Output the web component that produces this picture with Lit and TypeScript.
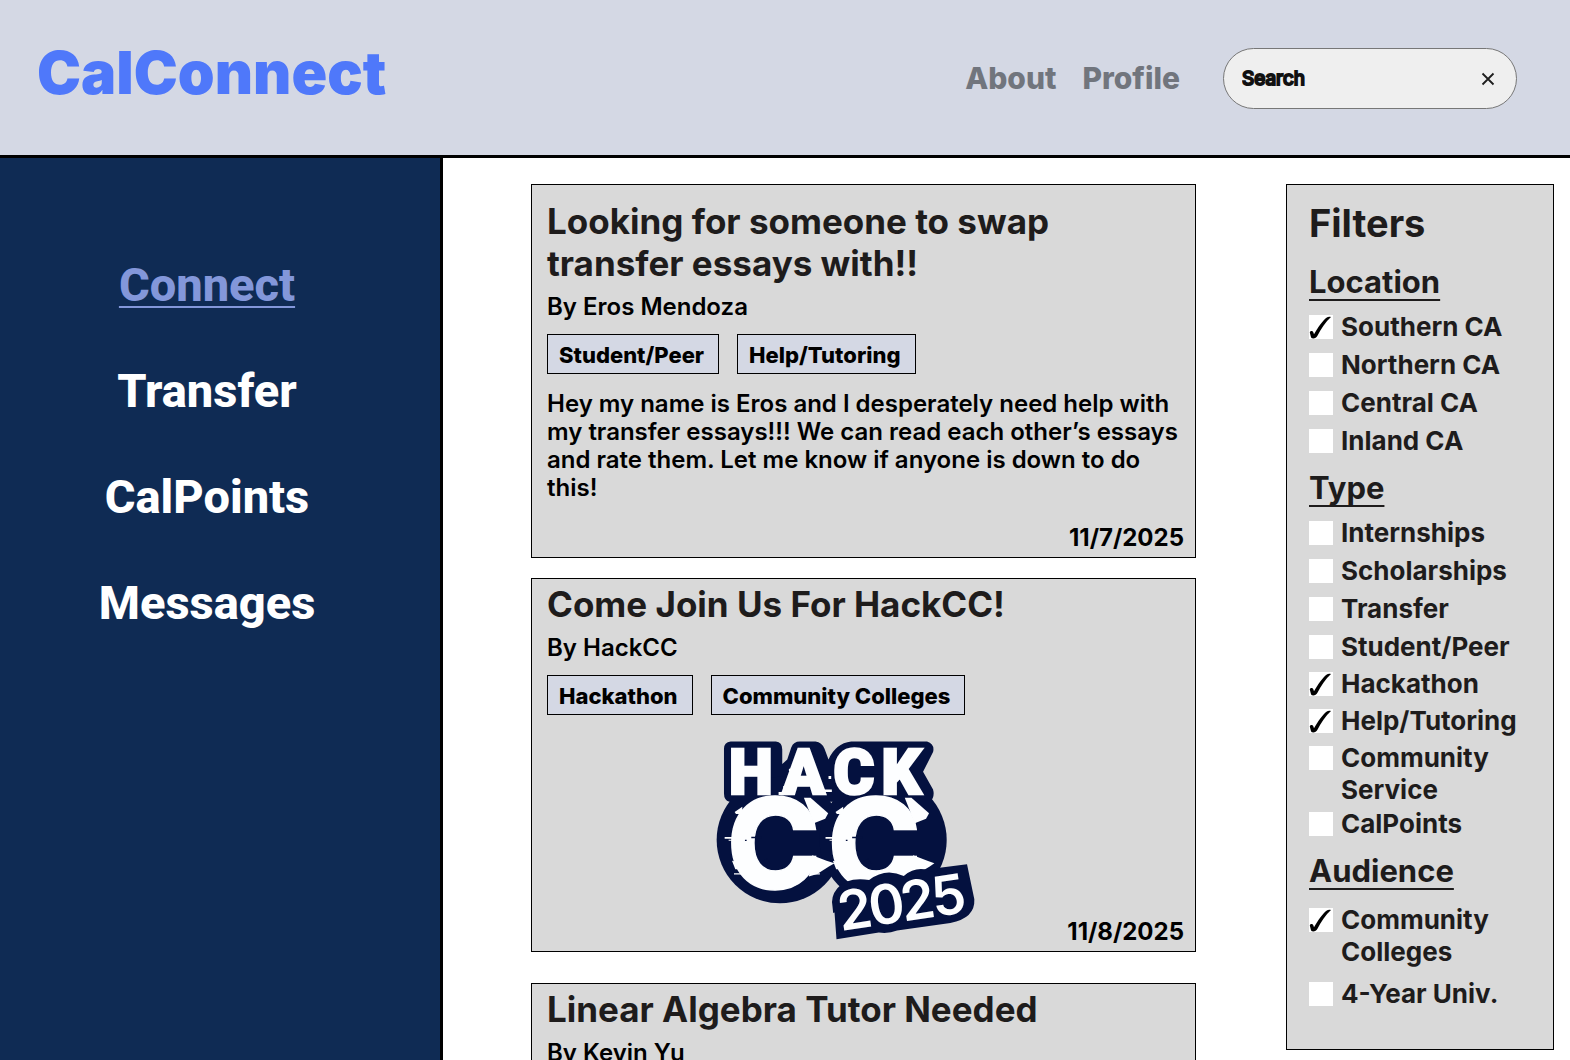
import { LitElement, html, css, nothing } from "lit";
import { customElement, property } from "lit/decorators.js";

interface FilterItem {
  label: string;
  checked?: boolean;
  spacing?: "close" | "snug" | "wide";
}

interface FilterGroup {
  name: string;
  items: FilterItem[];
}

const GROUPS: FilterGroup[] = [
  {
    name: "Location",
    items: [
      { label: "Southern CA", checked: true },
      { label: "Northern CA" },
      { label: "Central CA" },
      { label: "Inland CA" },
    ],
  },
  {
    name: "Type",
    items: [
      { label: "Internships" },
      { label: "Scholarships" },
      { label: "Transfer" },
      { label: "Student/Peer" },
      { label: "Hackathon", checked: true, spacing: "close" },
      { label: "Help/Tutoring", checked: true, spacing: "close" },
      { label: "Community Service", spacing: "close" },
      { label: "CalPoints", spacing: "snug" },
    ],
  },
  {
    name: "Audience",
    items: [
      { label: "Community Colleges", checked: true, spacing: "wide" },
      { label: "4-Year Univ.", spacing: "wide" },
    ],
  },
];

@customElement("hack-logo")
export class HackLogo extends LitElement {
  static styles = css`
    :host { display: block; }
    .logo { display: block; width: 263px; height: 200px; }
    .navy { fill: #04113f; }
    .white { fill: #fdfeff; }
    .hack { font: 900 187px Roboto, sans-serif; fill: #fdfeff; stroke: #fdfeff; stroke-width: 8px; }
    .cc { font: 800 378px Inter, sans-serif; fill: #fdfeff; stroke: #fdfeff; stroke-width: 4px; }
    .year { font: 600 164px Inter, sans-serif; fill: #fdfeff; }
  `;

  render() {
    return html`
      <svg class="logo" viewBox="40 30 790 600" role="img" aria-label="Hack CC 2025">
        <path class="navy" d="M90 34H226Q245 36 245 58V102L260 88 272 52Q279 34 298 34H345Q364 36 372 56L384 88Q405 40 452 34H680Q704 42 698 66L668 125 698 178Q704 200 690 215H86Q70 210 70 190V56Q70 36 90 34Z"></path>
        <circle class="navy" cx="238" cy="330" r="190"></circle>
        <circle class="navy" cx="548" cy="330" r="191"></circle>
        <text class="cc" x="78 381" y="478">CC</text>
        <g class="white">
          <path d="M310 203H330L383 250 374 266 340 280Z"></path>
          <path d="M613 203H633L686 250 677 266 643 280Z"></path>
          <path d="M335 376L378 392 402 400 384 410 350 432 325 440Z"></path>
          <path d="M638 376L681 392 702 400 687 410 650 432 628 440Z"></path>
          <path d="M72 321H102V326H72ZM84 329H102V332H84ZM102 246L125 230V252H106ZM94 392L120 398 116 418H104ZM100 430H128V434H100ZM340 430H358V434H340Z"></path>
          <path d="M375 321H405V326H375ZM387 329H405V332H387ZM405 246L428 230V252H409ZM397 392L423 398 419 418H407Z"></path>
        </g>
        <g class="navy">
          <path d="M152 320H182V325H152ZM133 329H138V333H133ZM184 394L200 386 210 402 200 402Z"></path>
          <path d="M455 320H485V325H455ZM436 329H441V333H436ZM487 394L503 386 513 402 503 402Z"></path>
        </g>
        <text class="hack" x="85 246 399 543" y="192">HACK</text>
        <path class="white" d="M265 116H285V123H265ZM272 130H292V136H272ZM248 168H268V178H248ZM234 186H262V195H234ZM384 138H392V147H384ZM370 178H394V186H370Z"></path>
        <path class="navy" d="M402 548L408 628 535 608Q565 612 590 602L750 579Q825 565 822 508L800 403 712 414 708 432Q655 400 610 438Q555 412 506 450Q440 440 410 476Q390 500 396 530L398 549Z"></path>
        <g transform="translate(421 603) rotate(-8.5)">
          <text class="year" x="0 93 190 284" y="0">2025</text>
        </g>
      </svg>
    `;
  }
}

@customElement("post-card")
export class PostCard extends LitElement {
  @property() heading = "";
  @property() author = "";
  @property() body = "";
  @property() date = "";
  @property({ attribute: false }) tags: string[] = [];
  @property({ type: Boolean }) logo = false;

  static styles = css`
    :host {
      display: flex;
      flex-direction: column;
      box-sizing: border-box;
      min-height: 374px;
      flex: none;
      padding: 4px 11px 5px 15px;
      border: 1px solid #000;
      background: #d9d9d9;
      color: #000;
    }
    .title { margin: 0; font-size: 35px; font-weight: 700; line-height: 42px; color: #1e1c1c; }
    .by { margin: 8px 0 0; font-size: 24px; font-weight: 600; line-height: 30px; }
    .tags { display: flex; gap: 18px; margin: 12px 0 0; padding: 0; list-style: none; }
    .tag {
      box-sizing: border-box;
      height: 40px;
      padding: 0 14px 0 11px;
      border: 1px solid #000;
      background: #d4d8e4;
      font-size: 22px;
      font-weight: 800;
      line-height: 40px;
    }
    .body { margin: 16px 0 0; font-size: 24px; font-weight: 600; line-height: 28px; }
    .foot { display: flex; flex: 1; align-items: flex-end; justify-content: flex-end; }
    .art { margin: 25px auto 6px 167px; }
    .date { font-size: 24px; font-weight: 700; line-height: 28px; }
  `;

  render() {
    return html`
      <h2 class="title">${this.heading}</h2>
      <p class="by">By ${this.author}</p>
      ${this.tags.length
        ? html`<ul class="tags">${this.tags.map((t) => html`<li class="tag">${t}</li>`)}</ul>`
        : nothing}
      ${this.body ? html`<p class="body">${this.body}</p>` : nothing}
      <div class="foot">
        ${this.logo ? html`<hack-logo class="art"></hack-logo>` : nothing}
        <time class="date">${this.date}</time>
      </div>
    `;
  }
}

@customElement("filter-panel")
export class FilterPanel extends LitElement {
  static styles = css`
    :host {
      display: block;
      box-sizing: border-box;
      padding: 15px 22px 39px;
      border: 1px solid #000;
      background: #d9d9d9;
      color: #1e1c1c;
      font-weight: 700;
    }
    .title { margin: 0 0 5px; font-size: 38px; font-weight: 700; line-height: 46px; }
    .group { min-width: 0; margin: 0; padding: 0; border: 0; }
    .name {
      padding: 11px 0 0;
      margin: 0 0 3px;
      font-size: 31px;
      line-height: 40px;
      text-decoration: underline;
      text-decoration-thickness: 2px;
      text-underline-offset: 6px;
    }
    .item { display: flex; gap: 8px; margin-top: 6px; font-size: 26px; line-height: 32px; }
    .close { margin-top: 5px; }
    .snug { margin-top: 2px; }
    .wide { margin-top: 10px; }
    .box { position: relative; flex: none; width: 24px; height: 24px; margin-top: 4px; }
    .check { appearance: none; display: block; width: 24px; height: 24px; margin: 0; background: #fff; }
    .tick { position: absolute; inset: 0; width: 24px; height: 24px; fill: #000; visibility: hidden; pointer-events: none; }
    .check:checked + .tick { visibility: visible; }
  `;

  render() {
    return html`
      <h2 class="title">Filters</h2>
      ${GROUPS.map(
        (g) => html`
          <fieldset class="group">
            <legend class="name">${g.name}</legend>
            ${g.items.map(
              (i) => html`
                <label class="item ${i.spacing ?? ""}">
                  <span class="box">
                    <input class="check" type="checkbox" ?checked=${i.checked} />
                    <svg class="tick" viewBox="0 0 24 24" aria-hidden="true">
                      <path d="M.8 17.600C.8 15.600 3.500 15.200 4.300 17.200L5 19.200C9 12.500 13.500 5.500 17.800 2.400C19 1.700 20.500 1.700 22 2C16.500 7 12 14 8.300 21C7.500 22.700 6 23.400 4.200 23.400C2.600 23.400 2.100 22.700 1.800 21.400Z"></path>
                    </svg>
                  </span>
                  <span>${i.label}</span>
                </label>
              `,
            )}
          </fieldset>
        `,
      )}
    `;
  }
}

@customElement("app-root")
export class AppRoot extends LitElement {
  static styles = css`
    :host {
      display: flex;
      flex-direction: column;
      height: 100vh;
      overflow: hidden;
      background: #fff;
      font-family: Inter, sans-serif;
    }
    .header {
      display: flex;
      align-items: center;
      box-sizing: border-box;
      height: 158px;
      flex: none;
      padding: 0 53px 0 37px;
      border-bottom: 3px solid #000;
      background: #d4d8e4;
    }
    .brand { margin: 0 auto 10px 0; font-size: 59px; font-weight: 900; line-height: 72px; color: #4f78fa; }
    .links { display: flex; gap: 26px; margin-right: 43px; }
    .link { color: #71757d; font-size: 30px; font-weight: 800; line-height: 36px; text-decoration: none; }
    .search {
      display: flex;
      align-items: center;
      box-sizing: border-box;
      width: 294px;
      height: 61px;
      margin-top: 2px;
      padding: 0 20px 0 18px;
      border: 1px solid #777;
      border-radius: 31px;
      background: #efefef;
    }
    .query {
      flex: 1;
      min-width: 0;
      padding: 0;
      border: 0;
      outline: 0;
      background: none;
      font: 400 19px Inter, sans-serif;
      color: #111;
    }
    .query::placeholder { color: #111; opacity: 1; -webkit-text-stroke: 2px #111; }
    .clear { display: flex; padding: 0; border: 0; background: none; }
    .cross { width: 16px; height: 16px; stroke: #1e1e1e; stroke-width: 1.8; fill: none; }
    .main { display: flex; flex: 1; min-height: 0; }
    .sidebar {
      display: flex;
      flex-direction: column;
      align-items: center;
      gap: 50px;
      box-sizing: border-box;
      width: 443px;
      flex: none;
      padding: 99px 26px 0 0;
      border-right: 3px solid #000;
      background: #0f2b54;
    }
    .nav { color: #fff; font: 800 47px/56px Roboto, sans-serif; text-decoration: none; }
    .active {
      color: #8397da;
      text-decoration: underline;
      text-decoration-thickness: 2px;
      text-underline-offset: 5px;
    }
    .feed {
      display: flex;
      flex: 1;
      flex-direction: column;
      gap: 20px;
      min-width: 0;
      padding: 26px 90px 0 88px;
      overflow: hidden;
    }
    .lead { padding-top: 15px; }
    .later { margin-top: 11px; }
    .filters { flex: none; width: 268px; margin: 26px 16px 0 0; align-self: flex-start; }
  `;

  render() {
    return html`
      <header class="header">
        <h1 class="brand">CalConnect</h1>
        <nav class="links">
          <a class="link" href="#about">About</a>
          <a class="link" href="#profile">Profile</a>
        </nav>
        <div class="search">
          <input class="query" type="text" placeholder="Search" aria-label="Search" />
          <button class="clear" type="button" aria-label="Clear">
            <svg class="cross" viewBox="0 0 16 16"><path d="M2.500 2.500l11 11M13.500 2.500L2.500 13.500"></path></svg>
          </button>
        </div>
      </header>
      <div class="main">
        <nav class="sidebar">
          <a class="nav active" href="#connect">Connect</a>
          <a class="nav" href="#transfer">Transfer</a>
          <a class="nav" href="#calpoints">CalPoints</a>
          <a class="nav" href="#messages">Messages</a>
        </nav>
        <main class="feed">
          <post-card
            class="lead"
            heading="Looking for someone to swap transfer essays with!!"
            author="Eros Mendoza"
            .tags=${["Student/Peer", "Help/Tutoring"]}
            body="Hey my name is Eros and I desperately need help with my transfer essays!!! We can read each other’s essays and rate them. Let me know if anyone is down to do this!"
            date="11/7/2025"
          ></post-card>
          <post-card
            heading="Come Join Us For HackCC!"
            author="HackCC"
            .tags=${["Hackathon", "Community Colleges"]}
            date="11/8/2025"
            logo
          ></post-card>
          <post-card class="later" heading="Linear Algebra Tutor Needed" author="Kevin Yu"></post-card>
        </main>
        <filter-panel class="filters"></filter-panel>
      </div>
    `;
  }
}
